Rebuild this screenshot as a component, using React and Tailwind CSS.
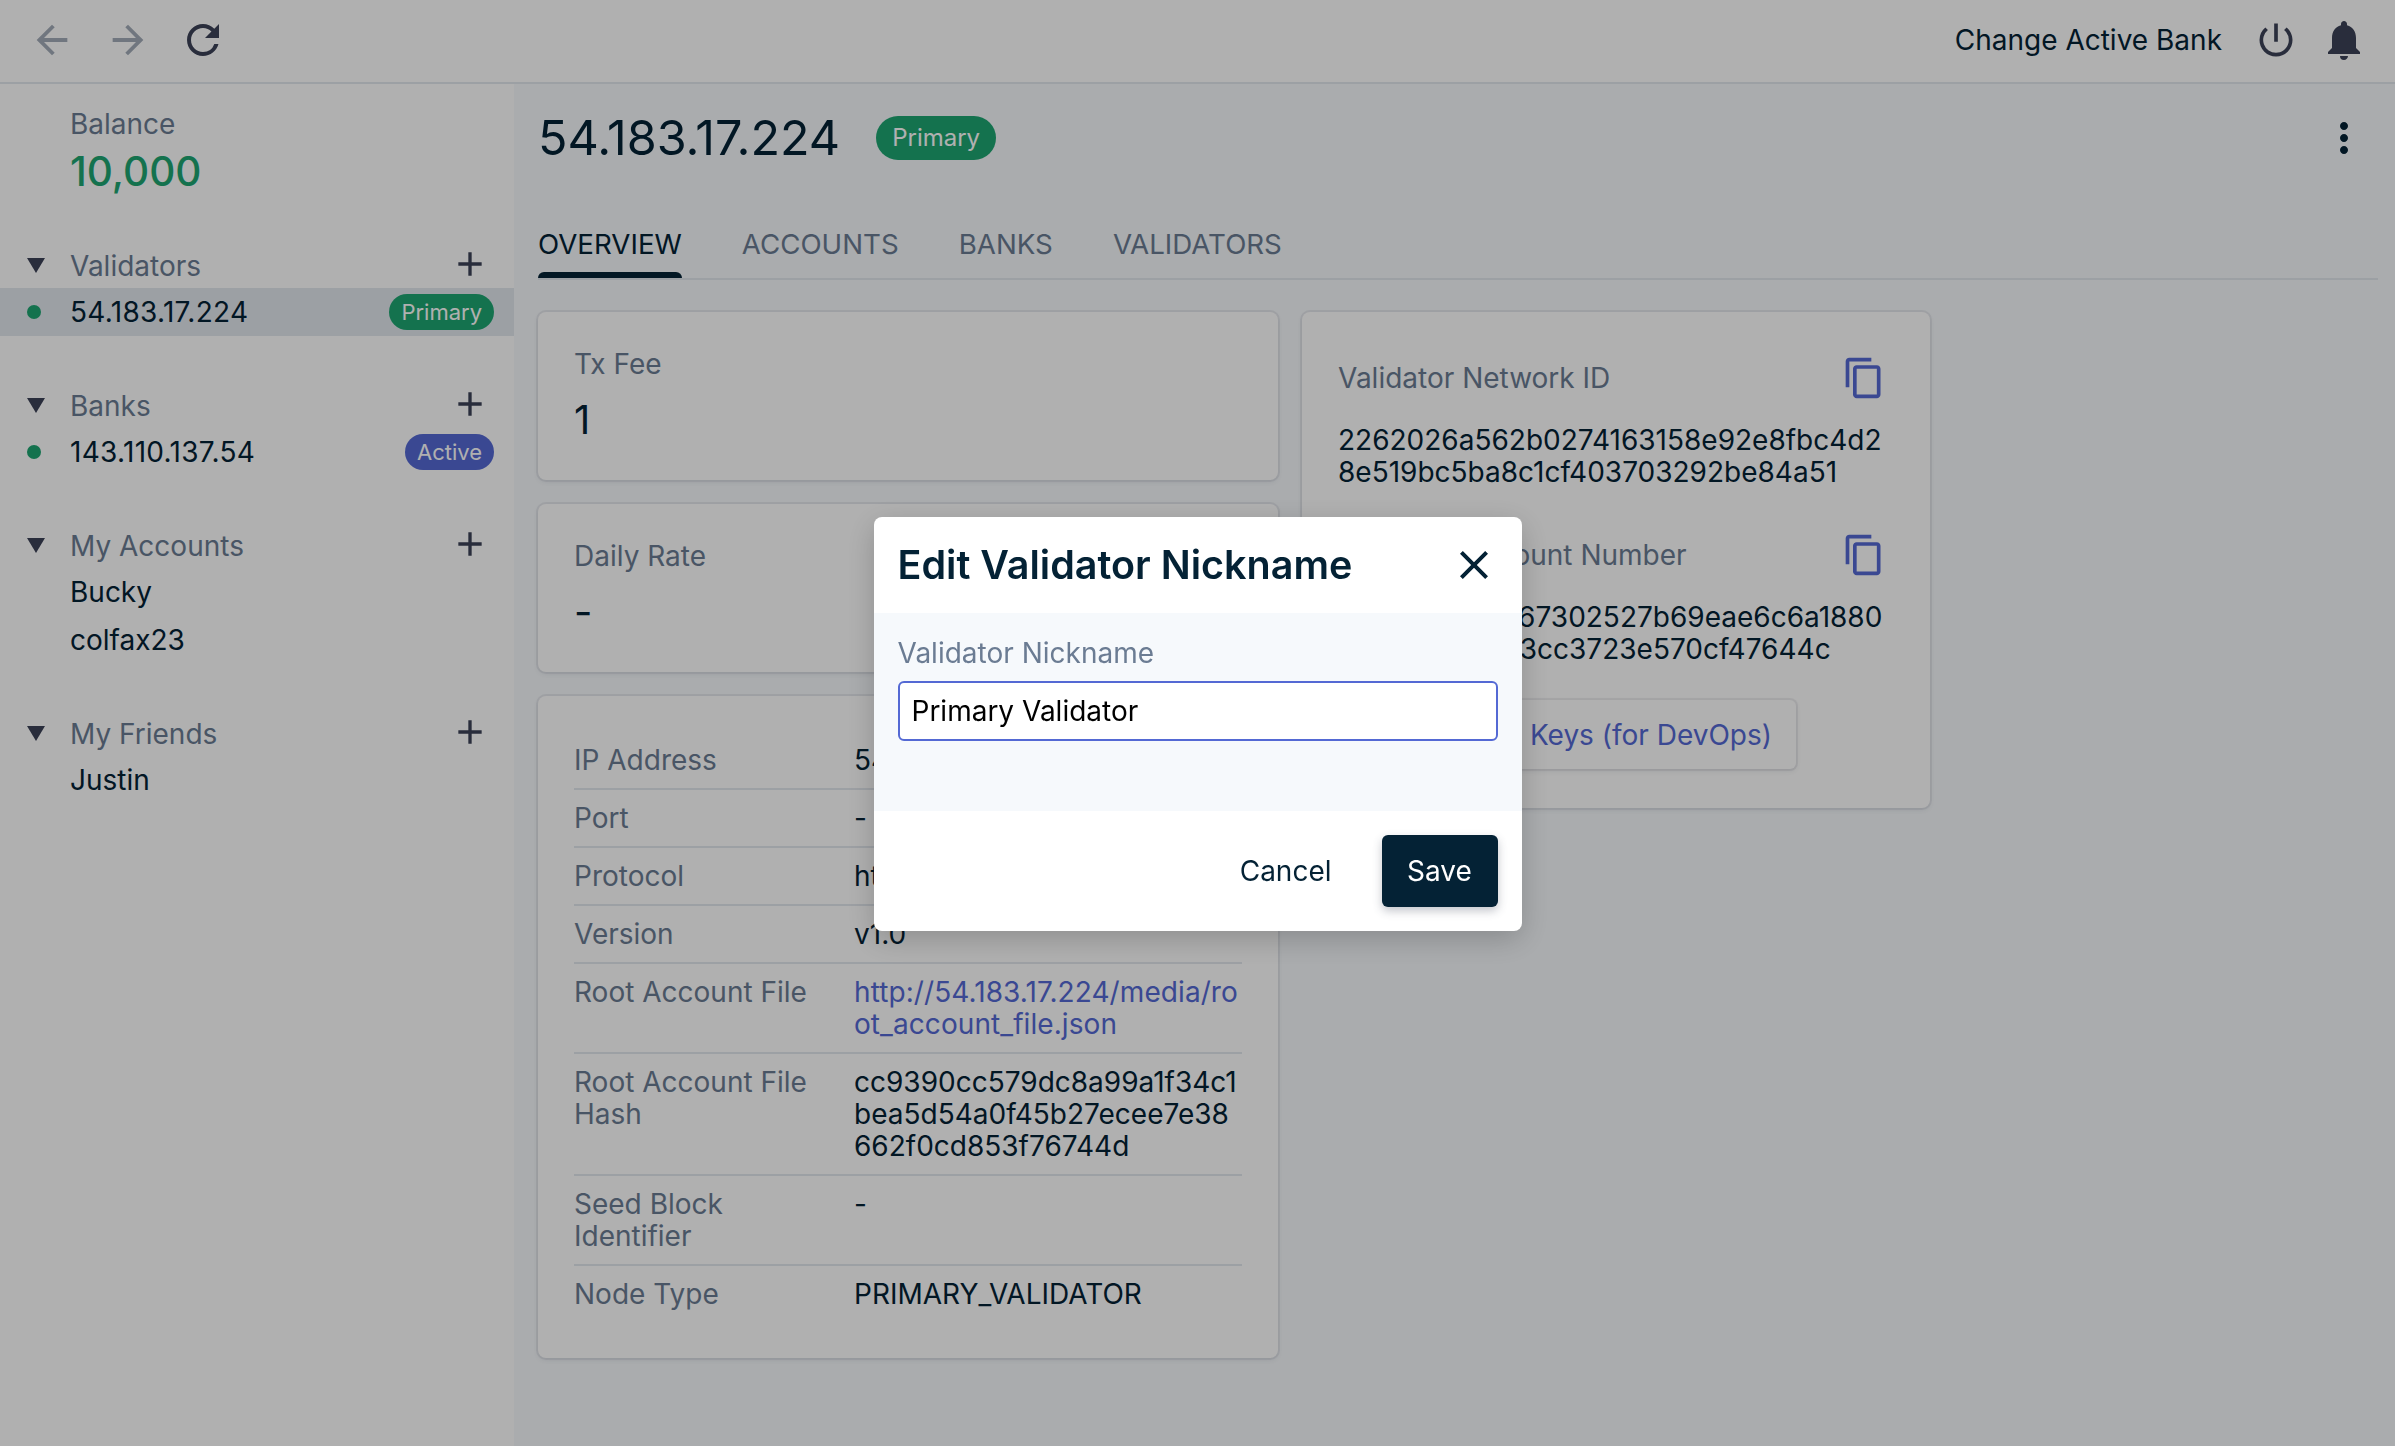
import React from 'react'
import {
  MdArrowBack, MdArrowForward, MdRefresh, MdPowerSettingsNew, MdNotifications,
  MdMoreVert, MdAdd, MdClose, MdContentCopy,
} from 'react-icons/md'

function Caret(){
  return (
    <svg width="18" height="15" viewBox="0 0 18 15" className="fill-[#3c4257]">
      <polygon points="0,0 18,0 9,15" />
    </svg>
  )
}

function Badge({ children, color, big }){
  return (
    <span className={`inline-flex items-center justify-center rounded-full text-white ${color} ${big ? 'h-[44px] px-[16px] text-[24px]' : 'h-[36px] px-[12px] text-[22px]'}`}>
      {children}
    </span>
  )
}

function SideHeader({ title }){
  return (
    <div className="flex h-[46px] items-center pl-[27px] pr-[32px]">
      <Caret />
      <span className="ml-[25px] flex-1 pt-[1px] text-[#6b7c93]">{title}</span>
      <MdAdd size={40} className="-mr-2 -mt-[3px] text-[#3c4257]" />
    </div>
  )
}

function SideRow({ label, dot, active, badge, num }){
  return (
    <div className={`flex h-[48px] items-center pr-[20px] ${active ? 'bg-[#e3e8ee]' : ''}`}>
      <div className="w-[70px] pl-[27px]">
        {dot && <div className="h-[14px] w-[14px] rounded-full bg-[#1ea672]" />}
      </div>
      <span className={`flex-1 ${num ? 'tracking-[0.3px]' : ''}`}>{label}</span>
      {badge}
    </div>
  )
}

function Sidebar(){
  return (
    <aside className="w-[514px] shrink-0 bg-white">
      <div className="h-[158px] pl-[70px] pt-[24px]">
        <div className="h-[32px] leading-[32px] text-[#6b7c93]">Balance</div>
        <div className="mt-[4px] text-[40.5px] font-medium leading-[56px] text-[#1ea672]">10,000</div>
      </div>
      <SideHeader title="Validators" />
      <SideRow label="54.183.17.224" num dot active badge={<Badge color="bg-[#1ea672]">Primary</Badge>} />
      <div className="h-[46px]" />
      <SideHeader title="Banks" />
      <SideRow label="143.110.137.54" num dot badge={<Badge color="bg-[#5469d4]">Active</Badge>} />
      <div className="h-[46px]" />
      <SideHeader title="My Accounts" />
      <SideRow label="Bucky" />
      <SideRow label="colfax23" />
      <div className="h-[46px]" />
      <SideHeader title="My Friends" />
      <SideRow label="Justin" />
    </aside>
  )
}

function Card({ className, children }){
  return (
    <div className={`rounded-lg bg-white shadow-[0_0_0_2px_rgba(60,66,87,0.08),0_2px_5px_rgba(60,66,87,0.1)] ${className}`}>
      {children}
    </div>
  )
}

function Stat({ label, value }){
  return (
    <Card className="h-[168px] px-[36px] pt-[36px]">
      <div className="text-[#6b7c93]">{label}</div>
      <div className="mt-[16px] text-[40px] leading-[48px]">{value}</div>
    </Card>
  )
}

const rows = [
  ['IP Address', '54.183.17.224'],
  ['Port', '-'],
  ['Protocol', 'http'],
  ['Version', 'v1.0'],
  ['Root Account File', 'http://54.183.17.224/media/root_account_file.json', true],
  ['Root Account File Hash', 'cc9390cc579dc8a99a1f34c1bea5d54a0f45b27ecee7e38662f0cd853f76744d'],
  ['Seed Block Identifier', '-'],
  ['Node Type', 'PRIMARY_VALIDATOR'],
]

function DetailCard(){
  return (
    <Card className="h-[662px] px-[36px] pt-[36px]">
      {rows.map(([k, v, link], i) => (
        <div key={k} className={`flex py-[12px] ${i < rows.length - 1 ? 'border-b-2 border-[#e3e8ee]' : ''}`}>
          <div className="w-[280px] shrink-0 pr-[20px] text-[#6b7c93]">{k}</div>
          <div className={`flex-1 break-all ${link ? 'text-[#5469d4] tracking-[0.08px]' : ''}`}>{v}</div>
        </div>
      ))}
    </Card>
  )
}

function CopyRow({ label, lines, className }){
  return (
    <div className={className}>
      <div className="flex h-[40px] items-center justify-between">
        <span className="text-[#6b7c93]">{label}</span>
        <MdContentCopy size={44} className="mr-[8px] text-[#5469d4]" />
      </div>
      <div className="mt-[26px]">
        {lines.map(l => <div key={l}>{l}</div>)}
      </div>
    </div>
  )
}

function IdCard(){
  return (
    <Card className="h-[496px] w-[628px] px-[36px] pt-[46px]">
      <CopyRow label="Validator Network ID" lines={['2262026a562b0274163158e92e8fbc4d2', '8e519bc5ba8c1cf403703292be84a51']} />
      <CopyRow
        className="mt-[47px]"
        label="Validator Account Number"
        lines={['4d1a09be72e67302527b69eae6c6a1880', '5bd2709e1443cc3723e570cf47644c']}
      />
      <button className="mt-[35px] h-[69px] w-[458px] rounded-md bg-white pr-[24px] text-right text-[#5469d4] shadow-[0_0_0_2px_rgba(60,66,87,0.08),0_2px_5px_rgba(60,66,87,0.12)]">
        Signing Keys (for DevOps)
      </button>
    </Card>
  )
}

function Modal(){
  return (
    <div className="fixed inset-0 flex items-center justify-center bg-[rgba(0,0,0,0.31)]">
      <div className="mt-[2px] w-[648px] overflow-hidden rounded-lg bg-white shadow-[0_8px_30px_rgba(0,0,0,0.2)]">
        <div className="flex h-[96px] items-center justify-between pl-[24px] pr-[24px]">
          <h2 className="text-[39.5px] font-semibold leading-[48px]">Edit Validator Nickname</h2>
          <MdClose size={48} />
        </div>
        <div className="h-[198px] bg-[#f6f9fc] px-[24px] pt-[24px]">
          <label className="block h-[32px] text-[#6b7c93]">Validator Nickname</label>
          <input
            readOnly
            value="Primary Validator"
            className="mt-[12px] h-[60px] w-full rounded-md border-2 border-[#5469d4] bg-white px-[12px] text-black outline-none"
          />
        </div>
        <div className="flex h-[120px] items-center justify-end gap-[50px] px-[24px]">
          <button>Cancel</button>
          <button className="h-[72px] w-[116px] rounded-md bg-[#042235] text-white shadow-[0_4px_10px_rgba(60,66,87,0.3)]">Save</button>
        </div>
      </div>
    </div>
  )
}

export default function App(){
  const tabs = ['ACCOUNTS', 'BANKS', 'VALIDATORS']
  return (
    <div className="flex h-[1446px] flex-col overflow-hidden bg-white font-['Inter',sans-serif] text-[28px] leading-[32px] text-[#042235]">
      <header className="flex h-[84px] shrink-0 items-center border-b-2 border-[#e3e8ee] pb-[3px] pl-[29px] pr-[27px]">
        <MdArrowBack size={46} className="text-[#a3acb9]" />
        <MdArrowForward size={46} className="ml-[30px] text-[#a3acb9]" />
        <MdRefresh size={48} className="ml-[28px] text-[#3c4257]" />
        <span className="ml-auto">Change Active Bank</span>
        <MdPowerSettingsNew size={44} className="ml-[32px] text-[#3c4257]" />
        <MdNotifications size={48} className="ml-[22px] text-[#3c4257]" />
      </header>
      <div className="flex flex-1">
        <Sidebar />
        <main className="flex-1 bg-[#f6f9fc] pl-[24px] pr-[17px]">
          <div className="flex h-[107px] items-center">
            <h1 className="text-[48.5px] leading-[56px]">54.183.17.224</h1>
            <span className="ml-[36px]"><Badge big color="bg-[#1ea672]">Primary</Badge></span>
            <MdMoreVert size={48} className="ml-auto mr-[10px]" />
          </div>
          <div className="mt-[37px] flex h-[52px] gap-[60px] border-b-2 border-[#e3e8ee] text-[27.7px]">
            <div className="relative text-[#042235]">
              OVERVIEW
              <div className="absolute bottom-0 left-0 right-0 h-[6px] rounded-t-md bg-[#042235]" />
            </div>
            {tabs.map(t => <div key={t} className="text-[#6b7c93]">{t}</div>)}
          </div>
          <div className="mt-[32px] flex items-start gap-[24px]">
            <div className="flex w-[740px] flex-col gap-[24px]">
              <Stat label="Tx Fee" value="1" />
              <Stat label="Daily Rate" value="-" />
              <DetailCard />
            </div>
            <IdCard />
          </div>
        </main>
      </div>
      <Modal />
    </div>
  )
}
